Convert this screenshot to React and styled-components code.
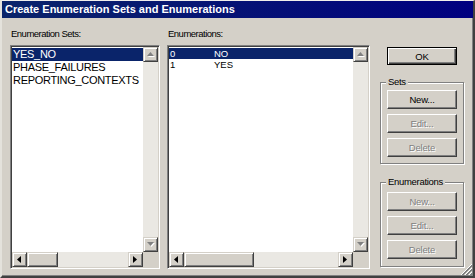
import React from 'react';
import styled, { createGlobalStyle } from 'styled-components';

const GlobalStyle = createGlobalStyle`
  html, body {
    margin: 0;
    padding: 0;
    background: #d4d0c8;
  }
  * {
    box-sizing: border-box;
  }
`;

const Window = styled.div`
  position: relative;
  width: 475px;
  height: 278px;
  display: flex;
  flex-direction: column;
  background: #d4d0c8;
  border-top: 1px solid #f1efeb;
  border-left: 2px solid #e4e2dc;
  border-right: 2px solid #404040;
  border-bottom: 2px solid #404040;
  box-shadow: inset -1px -1px 0 #808080;
  font-family: "Liberation Sans", Arial, sans-serif;
  color: #000;
  overflow: hidden;
`;

const TitleBar = styled.div`
  height: 17px;
  padding-left: 3px;
  background: linear-gradient(to right, #0a246a, #000080);
  color: #fff;
  font-size: 11px;
  font-weight: bold;
  line-height: 17px;
  white-space: nowrap;
`;

const Body = styled.div`
  flex: 1;
  display: flex;
  gap: 7px;
  padding: 10px 9px 7px 8px;
`;

const Column = styled.div`
  display: flex;
  flex-direction: column;
  width: ${(p) => p.$width}px;
  margin-left: ${(p) => p.$offset || 0}px;
`;

const Label = styled.div`
  height: 12px;
  margin-bottom: 5px;
  padding-left: 1px;
  font-size: 9.5px;
  line-height: 12px;
  letter-spacing: -0.5px;
  white-space: nowrap;
`;

const ListBox = styled.div`
  flex: 1;
  display: grid;
  grid-template-columns: 1fr 15px;
  grid-template-rows: 1fr 15px;
  padding: 1px;
  background: #fff;
  border: 1px solid;
  border-color: #808080 #fff #fff #808080;
  box-shadow: inset 1px 1px 0 #404040, inset -1px -1px 0 #d4d0c8;
  overflow: hidden;
`;

const Items = styled.div`
  padding-top: 1px;
  background: #fff;
  overflow: hidden;
  font-size: ${(p) => p.$size}px;
`;

const Row = styled.div`
  display: grid;
  grid-template-columns: ${(p) => p.$cols || '1fr'};
  height: ${(p) => p.$h}px;
  line-height: ${(p) => p.$h}px;
  padding-left: ${(p) => p.$pad}px;
  letter-spacing: ${(p) => p.$ls || 0}px;
  white-space: nowrap;
  background: ${(p) => (p.$selected ? '#0a246a' : 'transparent')};
  color: ${(p) => (p.$selected ? '#fff' : '#000')};
`;

const VScroll = styled.div`
  display: flex;
  flex-direction: column;
  background: #eae8e3;
`;

const HScroll = styled.div`
  display: flex;
  background: #eae8e3;
`;

const Track = styled.div`
  flex: 1;
`;

const Corner = styled.div`
  background: #d4d0c8;
`;

const ScrollBtn = styled.div`
  flex: 0 0 15px;
  width: 15px;
  height: 15px;
  display: flex;
  align-items: center;
  justify-content: center;
  background: #d4d0c8;
  border: 1px solid;
  border-color: #d4d0c8 #404040 #404040 #d4d0c8;
  box-shadow: inset 1px 1px 0 #fff, inset -1px -1px 0 #808080;
`;

const Thumb = styled.div`
  flex: 0 0 ${(p) => p.$size}px;
  background: #d4d0c8;
  border: 1px solid;
  border-color: #d4d0c8 #404040 #404040 #d4d0c8;
  box-shadow: inset 1px 1px 0 #fff, inset -1px -1px 0 #808080;
`;

const ButtonColumn = styled.div`
  display: flex;
  flex-direction: column;
  padding-top: 19px;
`;

const Button = styled.button`
  width: 70px;
  height: ${(p) => (p.$default ? 18 : 19)}px;
  margin: 0;
  padding: 0;
  display: flex;
  align-items: center;
  justify-content: center;
  background: #d4d0c8;
  font-family: "Liberation Sans", Arial, sans-serif;
  font-size: 9.5px;
  letter-spacing: -0.2px;
  color: ${(p) => (p.disabled ? '#808080' : '#000')};
  text-shadow: ${(p) => (p.disabled ? '1px 1px 0 #fff' : 'none')};
  border: 1px solid;
  border-color: ${(p) =>
    p.$default ? '#000' : '#fff #404040 #404040 #fff'};
  box-shadow: ${(p) =>
    p.$default
      ? 'inset 1px 1px 0 #fff, inset -1px -1px 0 #404040, inset -2px -2px 0 #808080'
      : 'inset -1px -1px 0 #808080, inset 1px 1px 0 #d4d0c8'};
  cursor: default;
`;

const OkButton = styled(Button)`
  margin-left: 7px;
`;

const GroupBox = styled.div`
  display: flex;
  flex-direction: column;
  gap: 5px;
  margin-top: ${(p) => p.$top}px;
  padding: 0 6px ${(p) => p.$pb}px 6px;
  border: 1px solid #808080;
  box-shadow: 1px 1px 0 #fff, inset 1px 1px 0 #fff;
`;

const GroupTitle = styled.div`
  align-self: flex-start;
  height: 12px;
  margin: -7px 0 ${(p) => p.$after}px -1px;
  padding: 0 2px;
  background: #d4d0c8;
  font-size: 9.5px;
  line-height: 12px;
  letter-spacing: -0.3px;
  white-space: nowrap;
`;

const Grip = styled.svg`
  position: absolute;
  right: 1px;
  bottom: 1px;
`;

const Arrow = ({ dir, disabled }) => {
  const shapes = {
    up: { w: 7, h: 4, pts: '3.5,0 7,4 0,4' },
    down: { w: 7, h: 4, pts: '0,0 7,0 3.5,4' },
    left: { w: 4, h: 7, pts: '4,0 4,7 0,3.5' },
    right: { w: 4, h: 7, pts: '0,0 4,3.5 0,7' },
  };
  const s = shapes[dir];
  return (
    <svg width={s.w + 1} height={s.h + 1} viewBox={`0 0 ${s.w + 1} ${s.h + 1}`}>
      {disabled && <polygon points={s.pts} fill="#fff" transform="translate(1 1)" />}
      <polygon points={s.pts} fill={disabled ? '#808080' : '#000'} />
    </svg>
  );
};

const List = ({ children, size, thumb }) => (
  <ListBox>
    <Items $size={size}>{children}</Items>
    <VScroll>
      <ScrollBtn>
        <Arrow dir="up" disabled />
      </ScrollBtn>
      <Track />
      <ScrollBtn>
        <Arrow dir="down" disabled />
      </ScrollBtn>
    </VScroll>
    <HScroll>
      <ScrollBtn>
        <Arrow dir="left" />
      </ScrollBtn>
      <Thumb $size={thumb} />
      <Track />
      <ScrollBtn>
        <Arrow dir="right" />
      </ScrollBtn>
    </HScroll>
    <Corner />
  </ListBox>
);

const sets = ['YES_NO', 'PHASE_FAILURES', 'REPORTING_CONTEXTS'];
const enumerations = [
  ['0', 'NO'],
  ['1', 'YES'],
];

export default function App() {
  return (
    <>
      <GlobalStyle />
      <Window>
        <TitleBar>Create Enumeration Sets and Enumerations</TitleBar>
        <Body>
          <Column $width={150}>
            <Label>Enumeration Sets:</Label>
            <List size={11} thumb={31}>
              {sets.map((s, i) => (
                <Row key={s} $h={13} $pad={1} $ls={-0.3} $selected={i === 0}>
                  {s}
                </Row>
              ))}
            </List>
          </Column>
          <Column $width={203}>
            <Label>Enumerations:</Label>
            <List size={9.5} thumb={70}>
              {enumerations.map(([v, n], i) => (
                <Row key={v} $h={11} $pad={1} $cols="44px 1fr" $selected={i === 0}>
                  <span>{v}</span>
                  <span>{n}</span>
                </Row>
              ))}
            </List>
          </Column>
          <Column $width={84} $offset={3}>
            <ButtonColumn>
              <OkButton $default>OK</OkButton>
              <GroupBox $top={17} $pb={6}>
                <GroupTitle $after={-3}>Sets</GroupTitle>
                <Button>New...</Button>
                <Button disabled>Edit...</Button>
                <Button disabled>Delete</Button>
              </GroupBox>
              <GroupBox $top={18} $pb={7}>
                <GroupTitle $after={-1}>Enumerations</GroupTitle>
                <Button disabled>New...</Button>
                <Button disabled>Edit...</Button>
                <Button disabled>Delete</Button>
              </GroupBox>
            </ButtonColumn>
          </Column>
        </Body>
        <Grip width="12" height="12" viewBox="0 0 12 12">
          {[0, 4, 8].map((o) => (
            <g key={o}>
              <line x1={1 + o} y1="12" x2="12" y2={1 + o} stroke="#fff" strokeWidth="1" />
              <line x1={2 + o} y1="12" x2="12" y2={2 + o} stroke="#808080" strokeWidth="1" />
              <line x1={3 + o} y1="12" x2="12" y2={3 + o} stroke="#808080" strokeWidth="1" />
            </g>
          ))}
        </Grip>
      </Window>
    </>
  );
}
